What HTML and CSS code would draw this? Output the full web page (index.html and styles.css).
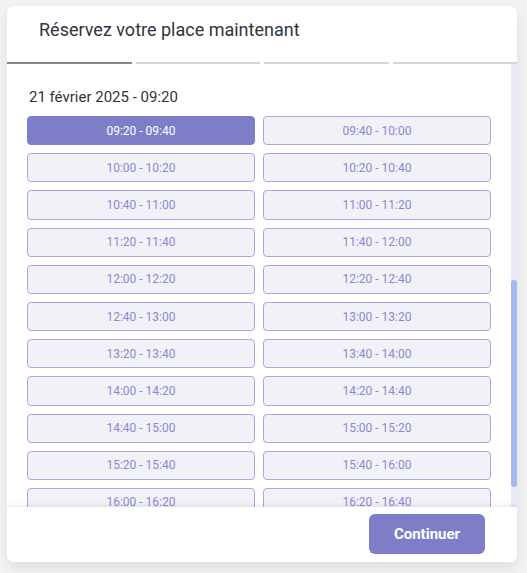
FILE: index.html
```html
<!DOCTYPE html>
<html lang="fr">
<head>
<meta charset="utf-8">
<title>Réservation</title>
<link rel="stylesheet" href="styles.css">
</head>
<body>
<div class="page">
  <div class="card">
    <div class="header">
      <h1 class="title">Réservez votre place maintenant</h1>
    </div>
    <div class="steps">
      <span class="step active"></span>
      <span class="step"></span>
      <span class="step"></span>
      <span class="step"></span>
    </div>
    <div class="body">
      <div class="content">
        <div class="date">21 février 2025 - 09:20</div>
        <div class="slots">
          <button class="slot selected">09:20 - 09:40</button>
          <button class="slot">09:40 - 10:00</button>
          <button class="slot">10:00 - 10:20</button>
          <button class="slot">10:20 - 10:40</button>
          <button class="slot">10:40 - 11:00</button>
          <button class="slot">11:00 - 11:20</button>
          <button class="slot">11:20 - 11:40</button>
          <button class="slot">11:40 - 12:00</button>
          <button class="slot">12:00 - 12:20</button>
          <button class="slot">12:20 - 12:40</button>
          <button class="slot">12:40 - 13:00</button>
          <button class="slot">13:00 - 13:20</button>
          <button class="slot">13:20 - 13:40</button>
          <button class="slot">13:40 - 14:00</button>
          <button class="slot">14:00 - 14:20</button>
          <button class="slot">14:20 - 14:40</button>
          <button class="slot">14:40 - 15:00</button>
          <button class="slot">15:00 - 15:20</button>
          <button class="slot">15:20 - 15:40</button>
          <button class="slot">15:40 - 16:00</button>
          <button class="slot">16:00 - 16:20</button>
          <button class="slot">16:20 - 16:40</button>
        </div>
      </div>
      <div class="scrollbar"><div class="thumb"></div></div>
    </div>
    <div class="footer">
      <button class="continue">Continuer</button>
    </div>
  </div>
</div>
</body>
</html>
```
FILE: styles.css
```css
* { box-sizing: border-box; }
html, body {
  margin: 0;
  padding: 0;
  background: #f3f3f3;
  font-family: Roboto, "Liberation Sans", Arial, sans-serif;
  height: 100%;
  overflow: hidden;
}
.page {
  padding: 6px 0 0 7px;
}
.card {
  width: 510px;
  height: 556px;
  background: #ffffff;
  border-radius: 7px;
  box-shadow: 0 6px 14px rgba(0, 0, 0, 0.09);
  display: flex;
  flex-direction: column;
  overflow: hidden;
}
.header {
  padding: 12px 32px 20px 32px;
}
.title {
  margin: 0;
  font-size: 18px;
  line-height: 24px;
  font-weight: 400;
  color: #2e3440;
}
.steps {
  display: flex;
  gap: 4px;
  height: 2px;
}
.step {
  flex: 1;
  background: #d2d6db;
}
.step.active {
  background: #80878f;
}
.body {
  flex: 1;
  display: flex;
  min-height: 0;
}
.content {
  flex: 1;
  overflow: hidden;
  padding: 23px 20px 0 20px;
}
.date {
  font-size: 15px;
  line-height: 20px;
  color: #333333;
  padding-left: 2px;
  margin-bottom: 9px;
}
.slots {
  display: grid;
  grid-template-columns: 228px 228px;
  column-gap: 8px;
  row-gap: 8px;
}
.slot {
  height: 29.2px;
  border: 1px solid #aaa6e2;
  background: #f1f1f8;
  border-radius: 4px;
  color: #8c88d0;
  font-family: Roboto, "Liberation Sans", Arial, sans-serif;
  font-size: 12px;
  padding: 0;
  cursor: pointer;
}
.slot.selected {
  background: #7e7ec8;
  border-color: #7e7ec8;
  color: #ffffff;
}
.scrollbar {
  width: 6px;
  background: #e6eaf8;
  padding-top: 216px;
}
.thumb {
  height: 207px;
  background: #a7b7ef;
  border-radius: 3px;
}
.footer {
  position: relative;
  height: 55px;
  background: #ffffff;
  box-shadow: 0 -2px 4px rgba(0, 0, 0, 0.08);
  display: flex;
  justify-content: flex-end;
  align-items: flex-start;
  padding: 7px 32px 0 0;
}
.continue {
  width: 116px;
  height: 40px;
  border: none;
  border-radius: 6px;
  background: #7e7ec8;
  color: #ffffff;
  font-family: Roboto, "Liberation Sans", Arial, sans-serif;
  font-size: 15px;
  font-weight: 700;
  cursor: pointer;
}
```
